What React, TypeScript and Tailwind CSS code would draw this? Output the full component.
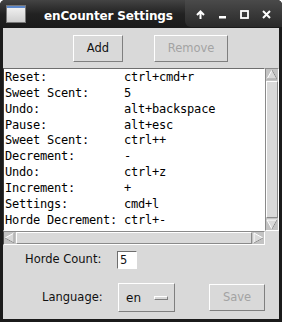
const bindings: [string, string][] = [
  ['Reset:', 'ctrl+cmd+r'],
  ['Sweet Scent:', '5'],
  ['Undo:', 'alt+backspace'],
  ['Pause:', 'alt+esc'],
  ['Sweet Scent:', 'ctrl++'],
  ['Decrement:', '-'],
  ['Undo:', 'ctrl+z'],
  ['Increment:', '+'],
  ['Settings:', 'cmd+l'],
  ['Horde Decrement:', 'ctrl+-'],
]

function Arrow({ dir }: { dir: 'up' | 'down' | 'left' | 'right' }) {
  // raised tk-style triangle in a 12x11 box
  const pts = {
    up: '6,1 11,10 1,10',
    down: '1,1 11,1 6,10',
    left: '1,6 10,1 10,11',
    right: '1,1 10,6 1,11',
  }[dir]
  const vertical = dir === 'up' || dir === 'down'
  return (
    <svg width={vertical ? 12 : 11} height={vertical ? 11 : 12} viewBox={vertical ? '0 0 12 11' : '0 0 11 12'} className="block shrink-0">
      <polygon points={pts} fill="#d9d9d9" stroke="#ffffff" strokeWidth="1" />
      {dir === 'up' && <polyline points="6,1 11,10 1,10" fill="none" stroke="#8a8a8a" strokeWidth="1" />}
      {dir === 'down' && <polyline points="11,1 6,10" fill="none" stroke="#8a8a8a" strokeWidth="1" />}
      {dir === 'left' && <polyline points="10,1 10,11 1,6" fill="none" stroke="#8a8a8a" strokeWidth="1" />}
      {dir === 'right' && <polyline points="1,11 10,6" fill="none" stroke="#8a8a8a" strokeWidth="1" />}
    </svg>
  )
}

export default function App() {
  return (
    <div className="w-[282px] h-[322px] bg-[#1b1b1b] rounded-t-[5px] overflow-hidden flex flex-col font-['DejaVu_Sans',sans-serif]">

      {/* Title bar */}
      <div className="h-[28px] shrink-0 flex items-center bg-gradient-to-b from-[#444444] via-[#222222] to-[#1b1b1b] relative">
        <div className="ml-[6px] w-[20px] h-[18px] border border-[#777] bg-gradient-to-b from-[#f4f4f4] to-[#cfcfcf] flex flex-col">
          <div className="h-[2px] bg-[#5b86c8]" />
        </div>
        <span className="ml-[18px] mt-[4px] text-white text-[12px] font-bold tracking-[-0.15px]">
          enCounter Settings
        </span>
        <div className="flex-1" />
        <div className="h-[27px] self-start flex items-center gap-[13px] pl-[11px] pr-[11px] rounded-bl-[6px] bg-gradient-to-b from-[#4a4a4a] to-[#2a2a2a]">
          <svg width="9" height="9" viewBox="0 0 9 9" className="mt-[2px]">
            <path d="M4.5 1.5 V9 M1 5 L4.5 1.5 L8 5" stroke="white" strokeWidth="2" fill="none" />
          </svg>
          <svg width="9" height="9" viewBox="0 0 9 9" className="mt-[2px]">
            <rect x="1" y="6" width="7" height="2.5" fill="white" />
          </svg>
          <svg width="9" height="9" viewBox="0 0 9 9" className="mt-[2px]">
            <rect x="1" y="1" width="7" height="7" stroke="white" strokeWidth="1.8" fill="none" />
          </svg>
          <svg width="9" height="9" viewBox="0 0 9 9" className="mt-[2px]">
            <path d="M1 1 L8 8 M8 1 L1 8" stroke="white" strokeWidth="2" />
          </svg>
        </div>
      </div>

      {/* Body */}
      <div className="flex-1 mx-[3px] mb-[3px] bg-[#d9d9d9] flex flex-col text-[11.5px] text-[#111]">

        {/* Add / Remove */}
        <div className="flex pt-[7px] pl-[70px] gap-[31px]">
          <button className="w-[50px] h-[27px] border border-t-white border-l-white border-b-[#7f7f7f] border-r-[#7f7f7f] bg-[#d9d9d9] flex items-center justify-center">
            Add
          </button>
          <button className="w-[74px] h-[27px] border border-t-white border-l-white border-b-[#7f7f7f] border-r-[#7f7f7f] bg-[#d9d9d9] text-[#a3a3a3] flex items-center justify-center">
            Remove
          </button>
        </div>

        {/* Listbox with scrollbars */}
        <div className="mt-[6px] flex">
          <div className="w-[262px] flex flex-col">
            <div className="h-[163px] bg-white border border-t-[#6e6e6e] border-l-[#3a3a3a] border-b-white border-r-white pt-[1px] pl-[1px] font-['DejaVu_Sans_Mono',monospace] text-[12px] tracking-[-0.22px] leading-[15.86px] text-black whitespace-pre overflow-hidden">
              {bindings.map(([name, key], i) => (
                <div key={i}>{name.padEnd(17, ' ') + key}</div>
              ))}
            </div>
            <div className="h-[14px] bg-[#c3c3c3] border border-t-[#8a8a8a] border-l-[#4a4a4a] border-b-white border-r-white flex items-center">
              <Arrow dir="left" />
              <div className="flex-1 h-[12px] mx-[1px] bg-[#d9d9d9] border border-t-white border-l-white border-b-[#8a8a8a] border-r-[#8a8a8a]" />
              <Arrow dir="right" />
            </div>
          </div>
          <div className="w-[14px] flex flex-col">
            <div className="h-[163px] bg-[#c3c3c3] border border-t-[#8a8a8a] border-l-[#8a8a8a] border-b-white border-r-white flex flex-col items-center">
              <Arrow dir="up" />
              <div className="flex-1 w-[12px] my-[1px] bg-[#d9d9d9] border border-t-white border-l-white border-b-[#8a8a8a] border-r-[#8a8a8a]" />
              <Arrow dir="down" />
            </div>
          </div>
        </div>

        {/* Horde Count */}
        <div className="mt-[6px] flex items-center pl-[22px]">
          <span className="w-[80px]">Horde Count:</span>
          <div className="ml-[12px] w-[20px] h-[18px] bg-white border border-t-[#6e6e6e] border-l-[#6e6e6e] border-b-white border-r-white pl-[2px] leading-[16px]">
            5
          </div>
        </div>

        {/* Language / Save */}
        <div className="mt-[14px] flex items-center pl-[39px]">
          <span className="w-[60px]">Language:</span>
          <div className="ml-[16px] w-[57px] h-[29px] border border-t-white border-l-white border-b-[#7f7f7f] border-r-[#7f7f7f] flex items-center pl-[7px]">
            <span className="text-[12px]">en</span>
            <div className="ml-[13px] w-[14px] h-[4px] bg-[#d9d9d9] border border-t-white border-l-white border-b-[#7f7f7f] border-r-[#7f7f7f]" />
          </div>
          <button className="ml-[34px] w-[56px] h-[27px] border border-t-white border-l-white border-b-[#7f7f7f] border-r-[#7f7f7f] text-[#a3a3a3] flex items-center justify-center">
            Save
          </button>
        </div>

      </div>
    </div>
  )
}
